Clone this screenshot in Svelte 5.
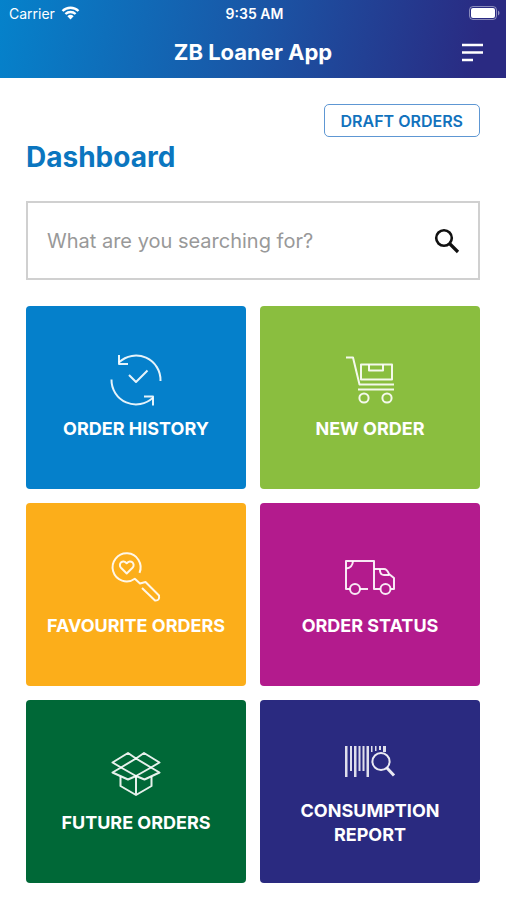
<script>
  let query = $state('');

  const tiles = [
    { id: 'history', label: 'Order History' },
    { id: 'new', label: 'New Order' },
    { id: 'favourite', label: 'Favourite Orders' },
    { id: 'status', label: 'Order Status' },
    { id: 'future', label: 'Future Orders' },
    { id: 'report', label: 'Consumption Report' },
  ];
</script>

<div class="app">
  <header>
    <div class="status-bar">
      <div class="carrier">
        <span>Carrier</span>
        <svg width="19" height="14" viewBox="0 0 19 14" aria-hidden="true">
          <path d="M1.5 5a11.5 11.5 0 0 1 16 0M4.4 8a7.4 7.4 0 0 1 10.2 0" fill="none" stroke="#fff" stroke-width="2.4" />
          <path d="M9.5 13.5 6.4 10.3a4.5 4.5 0 0 1 6.2 0z" fill="#fff" />
        </svg>
      </div>
      <span class="time">9:35 AM</span>
      <div class="battery">
        <svg width="31" height="14" viewBox="0 0 31 14" aria-hidden="true">
          <rect x="0.5" y="0.5" width="27" height="13" rx="3.5" fill="none" stroke="#fff" stroke-opacity="0.45" />
          <rect x="2" y="2" width="24" height="10" rx="2" fill="#fff" />
          <path d="M29 4.5c2 1 2 4 0 5z" fill="#fff" fill-opacity="0.5" />
        </svg>
      </div>
    </div>
    <div class="title-bar">
      <h1>ZB Loaner App</h1>
      <button class="menu" aria-label="Menu">
        <svg width="21" height="19" viewBox="0 0 21 19">
          <path d="M0 2h21M0 9.5h21M0 17h11" stroke="#fff" stroke-width="2.6" />
        </svg>
      </button>
    </div>
  </header>

  <main>
    <button class="draft">DRAFT ORDERS</button>
    <h2>Dashboard</h2>

    <form class="search" onsubmit={(e) => e.preventDefault()}>
      <input type="text" aria-label="Search" placeholder="What are you searching for?" bind:value={query} />
      <button aria-label="Search">
        <svg width="26" height="26" viewBox="0 0 26 26">
          <circle cx="10" cy="10" r="7.8" fill="none" stroke="#111" stroke-width="2.6" />
          <path d="M15.5 15.5 24 24" stroke="#111" stroke-width="3.2" />
        </svg>
      </button>
    </form>

    <div class="tiles">
      {#each tiles as tile (tile.id)}
        <button class="tile {tile.id}">
          <svg class="icon" viewBox="0 0 52 52" aria-hidden="true">
            {#if tile.id === 'history'}
              <path d="M9 8.400A24.500 24.500 0 0 1 50.500 27M1.500 25.500A24.500 24.500 0 0 0 43 43.600" />
              <path d="M9 1v9h9M34 42.500h9v9" />
              <path d="m19 21 7 7 11.500-11.500" />
            {:else if tile.id === 'new'}
              <path d="M2 3.500h7l6.500 27H50M14 35.500H50" />
              <rect x="17" y="10.5" width="31" height="15" />
              <path d="M25 10.500v6h14v-6" />
              <circle cx="20" cy="44" r="4.6" />
              <circle cx="43" cy="44" r="4.6" />
            {:else if tile.id === 'favourite'}
              <path d="M29.500 21.800A14 14 0 1 0 24.800 27.700L30 32.500 35.500 31 49 44.500Q50 50 45 49.500L32 37" />
              <path d="M16.700 22.500 11 16.800C7.500 13 13 7.500 16.700 12.300 20.500 7.500 26 13 22.500 16.800z" />
            {:else if tile.id === 'status'}
              <path d="M6 38H2V10H30V38H36.500M16 38H24" />
              <path d="M30 18H40Q43 18 45 23L50 27V38H46.500" />
              <path d="M2 17.500Q8.500 17 9 10M36 18V20Q36.500 24 40 24H45.500" />
              <circle cx="11" cy="38" r="5" />
              <circle cx="41.5" cy="38" r="5" />
            {:else if tile.id === 'future'}
              <path d="m26 10.500-8-5.500-15.500 9.500L11 19.500 2.500 24.500 18 31.500 26 28 34.500 31.500 49.500 24.500 41 19.500 49.500 14.500 34 5z" />
              <path d="m26 10.500 15 9L26 28 11 19.500z" />
              <path d="M10.500 28.500V38L26 47 41.500 38V28.500M26 28V47" />
            {:else}
              <g class="bars">
                <path d="M1 10h2.500v31H1zM10 10h2.500v31H10zM22.500 10H25v31h-2.500z" />
                <path d="M6 10h2v25H6zM14.500 10h2v25h-2zM18.500 10h2v25h-2z" />
                <path d="M27 10h1.500v6H27zM31 10h1.500v5H31zM35 10h2v4h-2zM39 10h3v6h-3z" />
              </g>
              <circle cx="37" cy="25.5" r="8.6" />
              <path class="handle" d="m43 32 7 7.500" />
            {/if}
          </svg>
          <span>{tile.label}</span>
        </button>
      {/each}
    </div>
  </main>
</div>

<style>
  :global(body) {
    margin: 0;
    background: #fff;
  }

  .app {
    font-family: Inter, "Liberation Sans", sans-serif;
  }

  button {
    font-family: inherit;
    cursor: pointer;
  }

  svg {
    display: block;
  }

  header {
    background: linear-gradient(100deg, #0582cb 0%, #1a56a6 50%, #2a2a82 94%);
    color: #fff;
  }

  .status-bar {
    display: grid;
    grid-template-columns: 1fr auto 1fr;
    align-items: center;
    height: 26px;
    padding: 0 6px 0 9px;
    font-size: 14px;
  }

  .carrier {
    display: flex;
    align-items: center;
    gap: 6px;
  }

  .time {
    font-weight: 600;
  }

  .battery {
    justify-self: end;
  }

  .title-bar {
    display: grid;
    grid-template-columns: 1fr auto 1fr;
    align-items: center;
    height: 52px;
    padding: 0 23px;
  }

  h1 {
    grid-column: 2;
    margin: 0;
    font-size: 22px;
    font-weight: 700;
  }

  .menu {
    justify-self: end;
    padding: 0;
    border: none;
    background: none;
  }

  main {
    display: flex;
    flex-direction: column;
    padding: 26px 26px 16px;
  }

  .draft {
    align-self: flex-end;
    height: 33px;
    padding: 0 16px;
    border: 1px solid #5e97d3;
    border-radius: 5px;
    background: #fff;
    color: #1272bd;
    font-size: 16px;
    font-weight: 600;
  }

  h2 {
    margin: 4px 0 28px;
    color: #0b76bf;
    font-size: 28px;
    font-weight: 700;
    line-height: 32px;
  }

  .search {
    display: flex;
    align-items: center;
    height: 75px;
    margin-bottom: 26px;
    padding: 0 18px 0 19px;
    border: 2px solid #d0d0d0;
  }

  .search input {
    flex: 1;
    min-width: 0;
    padding: 0;
    border: none;
    outline: none;
    background: none;
    font-family: inherit;
    font-size: 20px;
    color: #222;
  }

  .search input::placeholder {
    color: #999;
    opacity: 1;
  }

  .search button {
    padding: 0;
    border: none;
    background: none;
  }

  .tiles {
    display: grid;
    grid-template-columns: 1fr 1fr;
    gap: 14px;
  }

  .tile {
    display: flex;
    flex-direction: column;
    align-items: center;
    justify-content: center;
    gap: 11px;
    min-height: 183px;
    padding: 0 16px;
    border: none;
    border-radius: 4px;
    color: #fff;
    font-size: 18px;
    font-weight: 700;
    line-height: 24px;
    text-transform: uppercase;
  }

  .history { background: #0580cb; }
  .new { background: #8abe3f; }
  .favourite { background: #fcae1a; }
  .status { background: #b31b8d; }
  .future { background: #006837; }
  .report { background: #2a2a80; }

  .icon {
    width: 52px;
    height: 52px;
    overflow: visible;
    fill: none;
    stroke: #fff;
    stroke-opacity: 0.9;
    stroke-width: 2;
    stroke-linejoin: round;
  }

  .bars {
    fill: #fff;
    fill-opacity: 0.85;
    stroke: none;
  }

  .handle {
    stroke-width: 3;
  }
</style>
